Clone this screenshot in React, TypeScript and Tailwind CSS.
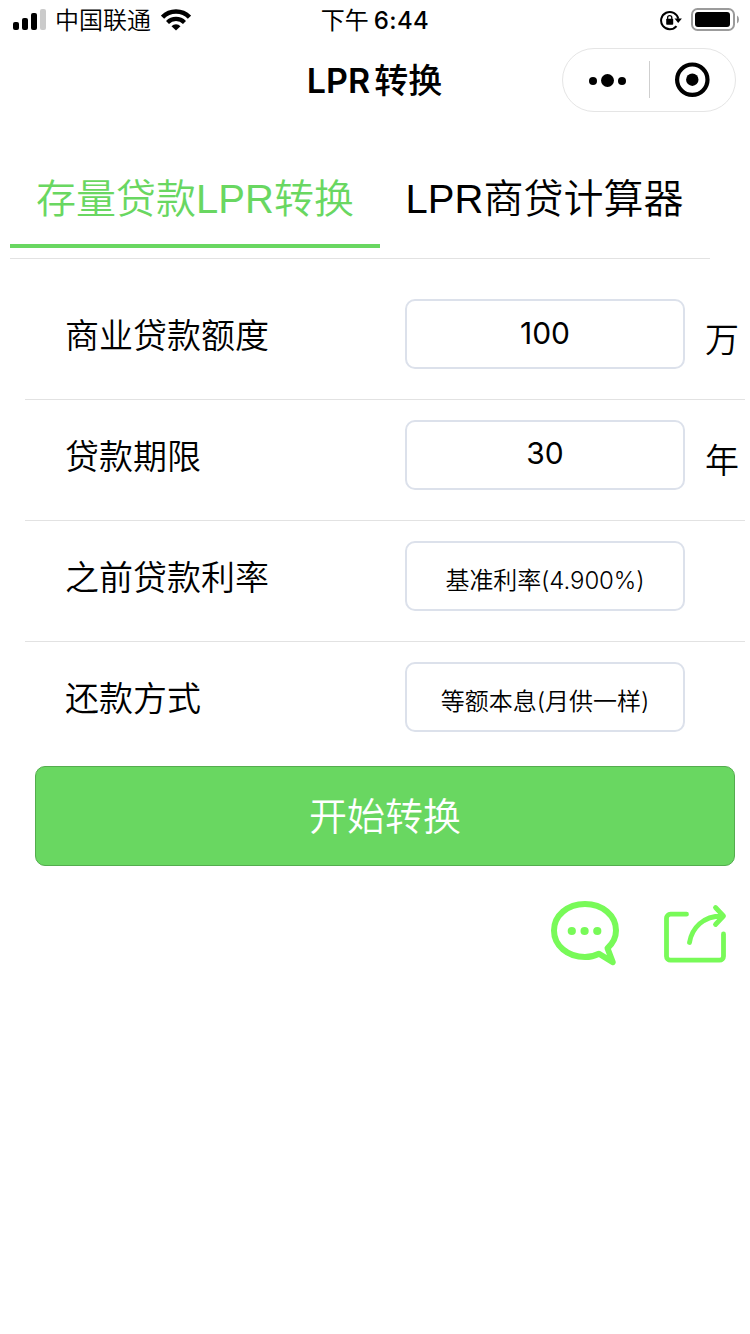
import type { ReactNode } from "react";

const sans = "font-['Inter','Noto_Sans_CJK_SC',sans-serif]";
const arial = "font-['Liberation_Sans','Noto_Sans_CJK_SC',sans-serif]";

function StatusBar() {
  return (
    <header className="grid h-10 grid-cols-3 items-center text-2xl leading-[38px]">
      <div className="flex h-10 items-center pl-[13px]">
        <svg width="33" height="22" viewBox="0 0 33 22" className="shrink-0">
          <rect x="0" y="13" width="6" height="8" rx="2" />
          <rect x="9" y="9" width="6" height="12" rx="2" />
          <rect x="18" y="4" width="6" height="17" rx="2" />
          <rect x="27" y="0" width="6" height="21" rx="2" fill="#cbcbcb" />
        </svg>
        <span className="ml-[9px] whitespace-nowrap pt-0.5 font-[350]">中国联通</span>
        <svg width="30" height="22" viewBox="0 0 30 22" className="ml-2.5 shrink-0">
          <path d="M1.500 8.200a18.800 18.800 0 0 1 27 0" fill="none" stroke="black" strokeWidth="4.600" />
          <path d="M6.500 13.500a12 12 0 0 1 17 0" fill="none" stroke="black" strokeWidth="4.200" />
          <path d="M10.500 17.200a6.400 6.400 0 0 1 9 0L15 21.600z" />
        </svg>
      </div>
      <div className="flex justify-center gap-[5px] pt-0.5 font-medium">
        <span className="font-normal">下午</span>
        <span className="tracking-[0.4px]">6:44</span>
      </div>
      <div className="flex items-center justify-end pr-[11px]">
        <svg width="22" height="22" viewBox="0 0 22 22">
          <path d="M16.500 17.200A8.700 8.700 0 1 1 18.300 9.800" fill="none" stroke="black" strokeWidth="2" />
          <path d="M14.500 9.500h7.400l-3.700 4.500z" />
          <rect x="6.200" y="9.800" width="7" height="6" rx="0.800" />
          <path d="M7.600 10.500V8.800a2.100 2.100 0 0 1 4.200 0v1.700" fill="none" stroke="black" strokeWidth="1.300" />
        </svg>
        <svg width="48" height="24" viewBox="0 0 48 24" className="ml-[9px]">
          <rect x="1" y="1" width="42" height="21" rx="5.500" fill="none" stroke="#9b9b9b" strokeWidth="2" />
          <rect x="4" y="4" width="35" height="15" rx="3" />
          <path d="M46 7.500q2 1 2 4t-2 4z" fill="#9b9b9b" />
        </svg>
      </div>
    </header>
  );
}

function NavBar() {
  return (
    <nav className="grid h-[88px] grid-cols-[188px_373px_175px] pt-2">
      <h1 className="col-start-2 flex h-16 items-center justify-center gap-1 text-[34px] font-semibold">
        <span>LPR</span>
        <span className="font-medium">转换</span>
      </h1>
      <div className="ml-px flex h-16 items-center rounded-full border border-[#e5e5e5]">
        <svg width="172" height="62" viewBox="0 0 172 62">
          <circle cx="30" cy="32" r="4" />
          <circle cx="44.500" cy="31.500" r="6.500" />
          <circle cx="59" cy="32" r="4" />
          <path d="M86.500 12v37" stroke="#cfcfcf" />
          <circle cx="129.300" cy="30.700" r="15.200" fill="none" stroke="black" strokeWidth="4.200" />
          <circle cx="129.300" cy="30.700" r="6.200" />
        </svg>
      </div>
    </nav>
  );
}

function Tabs() {
  return (
    <div
      className={`ml-2.5 mt-[22px] flex h-[109px] w-[700px] border-b border-[#e2e2e2] text-[40px] font-[350] leading-[98px] ${arial}`}
    >
      <button className="h-[98px] w-[370px] whitespace-nowrap border-b-4 border-[#69d761] text-center text-[#69d761]">
        存量贷款LPR转换
      </button>
      <button className="h-[98px] w-[329px] whitespace-nowrap">LPR商贷计算器</button>
    </div>
  );
}

interface RowProps {
  label: string;
  unit?: string;
  last?: boolean;
  children: ReactNode;
}

function Row({ label, unit, last, children }: RowProps) {
  return (
    <div
      className={`ml-[25px] flex w-[720px] pl-10 pt-5 text-[34px] font-[350] ${
        last ? "h-[124px]" : "h-[121px] border-b border-[#e2e2e2]"
      }`}
    >
      <label className="w-[340px] leading-[74px]">{label}</label>
      <div className="flex h-[70px] w-[280px] justify-center rounded-[10px] border-2 border-[#dce1eb]">{children}</div>
      {unit && <span className="ml-5 leading-[82px]">{unit}</span>}
    </div>
  );
}

function Actions() {
  return (
    <div className="mt-[35px] flex pl-[551px]">
      <svg width="69" height="66" viewBox="0 0 69 66" fill="none" stroke="#78fa58" strokeWidth="6" strokeLinejoin="round">
        <path d="M56.500 47.200C61.500 42.700 65 37 65 29.500C65 14.500 51.500 3 34 3S3 14.500 3 29.500S16.500 56 34 56Q41.500 56 48 52.700L61.800 61.200Z" />
        <g fill="#78fa58" stroke="none">
          <circle cx="20.800" cy="30" r="4.100" />
          <circle cx="33.600" cy="30" r="4.100" />
          <circle cx="46.300" cy="30" r="4.100" />
        </g>
      </svg>
      <svg
        width="63"
        height="66"
        viewBox="0 0 63 66"
        className="ml-11"
        fill="none"
        stroke="#78fa58"
        strokeWidth="4.800"
        strokeLinecap="round"
        strokeLinejoin="round"
      >
        <path d="M22.500 13.200H6.500a4 4 0 0 0-4 4v38a4 4 0 0 0 4 4h49a4 4 0 0 0 4-4V33" />
        <path d="M25.500 41.500C28 27 39 15 58 15M51.500 6.500l8 8.500-8 8.500" />
      </svg>
    </div>
  );
}

export default function App() {
  return (
    <main className={`h-[1334px] w-[750px] overflow-hidden bg-white text-black ${sans}`}>
      <StatusBar />
      <NavBar />
      <Tabs />
      <form className="pt-5">
        <Row label="商业贷款额度" unit="万">
          <span className="text-[30px] font-[380] leading-[65px]">100</span>
        </Row>
        <Row label="贷款期限" unit="年">
          <span className="text-[30px] font-[380] leading-[62px]">30</span>
        </Row>
        <Row label="之前贷款利率">
          <span className="text-2xl leading-[76px] tracking-[-0.1px]">基准利率(4.900%)</span>
        </Row>
        <Row label="还款方式" last>
          <span className="text-2xl leading-[76px]">等额本息(月供一样)</span>
        </Row>
        <button
          type="button"
          className="ml-[35px] block h-[100px] w-[700px] rounded-[10px] border border-[#54ac4e] bg-[#69d761] text-[38px] font-[350] leading-[99px] text-white"
        >
          开始转换
        </button>
      </form>
      <Actions />
    </main>
  );
}
